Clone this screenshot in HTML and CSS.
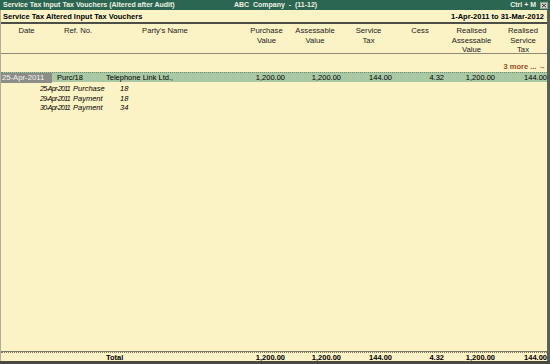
FILE: index.html
```html
<!DOCTYPE html>
<html lang="en">
<head>
    <meta charset="UTF-8">
    <meta name="viewport" content="width=device-width, initial-scale=1.0">
    <title>Service Tax Input Tax Vouchers</title>
    <link rel="stylesheet" href="styles.css">
</head>
<body>
    <div class="screen">
        <div class="titlebar">
            <span class="title-left">Service Tax Input Tax Vouchers (Altered after Audit)</span>
            <span class="title-mid">ABC  Company  -  (11-12)</span>
            <span class="title-right">Ctrl + M
                <svg class="close" width="8" height="7" viewBox="0 0 8 7">
                    <rect x="0.5" y="0.5" width="7" height="6" fill="#d8d8d0" stroke="#9a9a90"/>
                    <path d="M2 1.8 L6 5.2 M6 1.8 L2 5.2" stroke="#333" stroke-width="1"/>
                </svg>
            </span>
        </div>
        <div class="report">
            <div class="subhead">
                <span>Service Tax Altered Input Tax Vouchers</span>
                <span>1-Apr-2011 to 31-Mar-2012</span>
            </div>
            <div class="row colhead">
                <div class="c">Date</div>
                <div class="c">Ref. No.</div>
                <div class="party-h">Party's Name</div>
                <div class="c">Purchase<br>Value</div>
                <div class="c">Assessable<br>Value</div>
                <div class="c">Service<br>Tax</div>
                <div class="c">Cess</div>
                <div class="c">Realised<br>Assessable<br>Value</div>
                <div class="c">Realised<br>Service<br>Tax</div>
            </div>
            <div class="body">
                <div class="more">3 more ... &rarr;</div>
                <div class="row selected">
                    <div class="date">25-Apr-2011</div>
                    <div class="ref">Purc/18</div>
                    <div class="party">Telephone Link Ltd.,</div>
                    <div class="num">1,200.00</div>
                    <div class="num">1,200.00</div>
                    <div class="num">144.00</div>
                    <div class="num">4.32</div>
                    <div class="num">1,200.00</div>
                    <div class="num">144.00</div>
                </div>
                <div class="subrows">
                    <div class="sub">
                        <span class="sdate">25-Apr-2011</span><span>Purchase</span><span>18</span>
                    </div>
                    <div class="sub">
                        <span class="sdate">29-Apr-2011</span><span>Payment</span><span>18</span>
                    </div>
                    <div class="sub">
                        <span class="sdate">30-Apr-2011</span><span>Payment</span><span>34</span>
                    </div>
                </div>
            </div>
            <div class="total">
                <div class="row total-row">
                    <div></div>
                    <div></div>
                    <div class="total-label">Total</div>
                    <div class="num">1,200.00</div>
                    <div class="num">1,200.00</div>
                    <div class="num">144.00</div>
                    <div class="num">4.32</div>
                    <div class="num">1,200.00</div>
                    <div class="num">144.00</div>
                </div>
            </div>
        </div>
        <div class="bottombar"></div>
    </div>
</body>
</html>
```

FILE: styles.css
```css
html, body {
    margin: 0;
    padding: 0;
}
body {
    width: 550px;
    height: 364px;
    overflow: hidden;
    background-color: #fbf3c6;
    font-family: "Liberation Sans", Arial, sans-serif;
    color: #000;
}
.screen {
    display: flex;
    flex-direction: column;
    height: 364px;
}
.titlebar {
    display: grid;
    grid-template-columns: 1fr auto 1fr;
    height: 10px;
    line-height: 10px;
    background-color: #2b6653;
    color: #eef0e2;
    font-size: 7px;
    font-weight: bold;
    padding: 0 2px 0 3px;
}
.title-mid {
    white-space: pre;
}
.title-right {
    display: flex;
    justify-content: flex-end;
    align-items: center;
    gap: 4px;
}
.close {
    display: block;
}
.report {
    flex: 1;
    display: flex;
    flex-direction: column;
    border-left: 1px solid #b4ae94;
    border-right: 3px solid #58605a;
}
.subhead {
    display: flex;
    justify-content: space-between;
    height: 12px;
    line-height: 13px;
    padding: 0 3px 0 2px;
    font-size: 7.5px;
    font-weight: bold;
    border-bottom: 2px solid #4e4e48;
}
.row {
    display: grid;
    grid-template-columns: 51px 52px 140px 41px 56px 51px 52px 51px 52px;
}
.colhead {
    height: 27px;
    padding-top: 2px;
    line-height: 9.5px;
    font-size: 7.7px;
    color: #222;
    border-bottom: 1px solid #8e8a76;
}
.colhead .c {
    text-align: center;
}
.colhead .c:nth-child(n+4) {
    padding-left: 4px;
}
.party-h {
    padding-left: 38px;
}
.body {
    flex: 1;
}
.more {
    height: 18px;
    line-height: 25px;
    text-align: right;
    padding-right: 1px;
    font-size: 7.5px;
    font-weight: bold;
    color: #9b4a26;
    box-sizing: border-box;
}
.selected {
    height: 10px;
    line-height: 10px;
    font-size: 7.5px;
    background-color: #a9c9a5;
    border-top: 1px dotted #6f8a70;
    box-sizing: border-box;
}
.selected .date {
    background-color: #8c8c88;
    color: #f4f4f0;
    padding-left: 1px;
    font-size: 7.7px;
}
.ref {
    padding-left: 5px;
}
.party {
    padding-left: 2px;
}
.num {
    text-align: right;
}
.subrows {
    padding-top: 2px;
}
.sub {
    display: grid;
    grid-template-columns: 33px 47px auto;
    padding-left: 39px;
    height: 9.5px;
    line-height: 9.5px;
    font-size: 7.5px;
    font-style: italic;
}
.sdate {
    font-size: 7px;
    letter-spacing: -0.75px;
}
.total {
    border-top: 1px solid #7c786a;
}
.total-row {
    height: 9px;
    line-height: 9px;
    font-size: 7.5px;
    font-weight: bold;
    border-top: 1px dotted #7c786a;
    box-sizing: border-box;
}
.total-label {
    padding-left: 2px;
}
.bottombar {
    height: 3px;
    background-color: #4a4a42;
}
```
